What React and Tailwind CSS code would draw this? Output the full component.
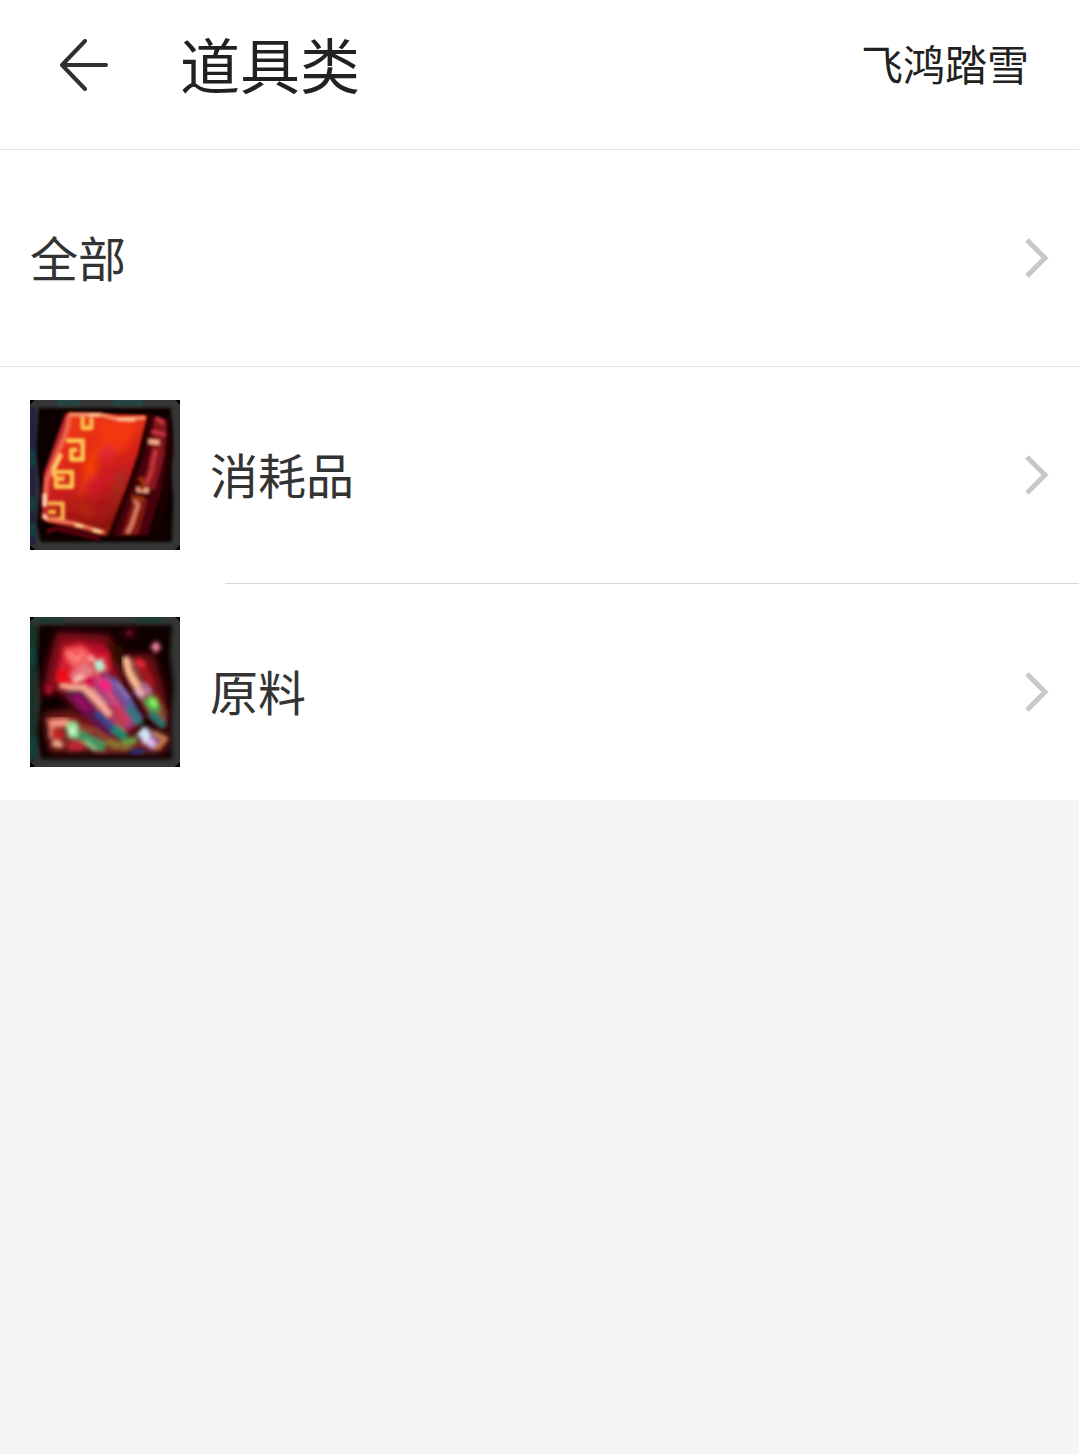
function BookIcon() {
  return (
    <svg viewBox="30 30 450 450" className="size-[150px] shrink-0" aria-hidden="true">
      <defs>
        <linearGradient id="cover" x1="0" y1="0" x2="0.3" y2="1">
          <stop offset="0" stopColor="#ef3a10" />
          <stop offset="0.35" stopColor="#e62e14" />
          <stop offset="0.65" stopColor="#c81c1c" />
          <stop offset="1" stopColor="#8c160c" />
        </linearGradient>
        <filter id="bookSoft" x="-10%" y="-10%" width="120%" height="120%">
          <feGaussianBlur stdDeviation="5" />
        </filter>
        <filter id="bookGlow" x="-30%" y="-30%" width="160%" height="160%">
          <feGaussianBlur stdDeviation="11" />
        </filter>
      </defs>
      <rect x="30" y="30" width="450" height="450" fill="#353536" />
      <g filter="url(#bookSoft)">
        <path d="M34 50V465" stroke="#20243a" strokeWidth="30" />
        <path d="M36 180V230M36 320V360M36 400V440" stroke="#0d4242" strokeWidth="16" />
        <path d="M110 36H180M280 36H370" stroke="#1f4a46" strokeWidth="16" />
        <path d="M56 54H452L458 130L452 220L460 330L455 456H62L50 400L60 300L48 180Z" fill="#080203" />
      </g>

      {/* spine */}
      <g filter="url(#bookSoft)">
        <path d="M385 75L445 84L440 200L425 300L385 435L285 440L300 350Z" fill="#4a0508" />
        <path d="M376 80L395 85L370 210L320 330L285 435L262 430L315 290Z" fill="#250102" />
        <path d="M405 90L438 100L430 200L404 300L368 290L392 190Z" fill="#86121c" />
        <path d="M340 325L382 330L355 432L305 436Z" fill="#82190f" />
        <path d="M408 84L432 100M395 124L436 134M408 180L396 228M400 230L378 286" stroke="#c8363e" strokeWidth="12" fill="none" />
        <path d="M386 154L418 158M350 298L386 302" stroke="#f5ab88" strokeWidth="14" />
        <path d="M340 322L354 345L334 408L322 430" stroke="#d6785e" strokeWidth="13" fill="none" />
        <path d="M360 262L374 280L362 300M335 322L372 328" stroke="#963010" strokeWidth="14" fill="none" />
        <path d="M446 90L454 180L440 300L410 420" stroke="#200104" strokeWidth="12" fill="none" />
      </g>

      {/* cover */}
      <g filter="url(#bookSoft)">
        <path d="M144 68L382 76L354 190L320 290L262 440L82 396L66 320L84 240Z" fill="url(#cover)" />
        <path d="M144 72L112 160L80 250L72 390" stroke="#b9252a" strokeWidth="16" fill="none" />
        <path d="M80 425L110 415L180 432L240 446" stroke="#5d0508" strokeWidth="14" fill="none" />
      </g>
      <g filter="url(#bookGlow)" opacity="0.75">
        <path d="M240 100L350 95L320 180L250 190Z" fill="#f83a0c" />
        <path d="M195 220L240 150L225 260L170 330Z" fill="#ff4a00" />
        <path d="M240 185L285 165L268 225Z" fill="#e3284c" />
        <path d="M190 275L275 250L220 335Z" fill="#d3152e" />
        <path d="M295 240L325 240L290 330L270 380Z" fill="#9a3528" />
        <path d="M150 340L240 350L210 390Z" fill="#b92a08" />
        <path d="M215 350L275 350L245 405Z" fill="#a8161e" />
      </g>

      {/* gold fret along the edge */}
      <g filter="url(#bookSoft)" fill="none" strokeLinejoin="round">
        <path d="M146 74L240 74L295 88L375 84" stroke="#f5906c" strokeWidth="12" />
        <path d="M205 76L240 75M292 88L345 90" stroke="#ffc89a" strokeWidth="10" />
        <path d="M148 78L144 110L130 150L110 196L82 265L74 345" stroke="#ee6450" strokeWidth="15" />
        <path d="M124 192L102 236L104 262" stroke="#ffcb6c" strokeWidth="13" />
        <path d="M188 80V114H214V84" stroke="#fcc34c" strokeWidth="13" />
        <path d="M140 152H188V208H154V180H172" stroke="#ffc652" strokeWidth="14" />
        <path d="M98 246H156V290H108V266H134" stroke="#ffc250" strokeWidth="14" />
        <path d="M84 340H128V388H90M84 366H108" stroke="#fab54a" strokeWidth="13" />
        <path d="M74 312V350M70 374L84 390" stroke="#ffdcb4" strokeWidth="12" />
        <path d="M80 388L122 394L160 400L200 412L254 428" stroke="#f0785c" strokeWidth="12" />
        <path d="M165 404L190 410M218 420L244 426" stroke="#ffd090" strokeWidth="12" />
      </g>
      <path d="M30 30h14l-14 14zM480 30h-14l14 14zM30 480h16l-16-16zM480 480h-16l16-16z" fill="#000" />
    </svg>
  )
}

function MaterialIcon() {
  return (
    <svg viewBox="30 30 450 450" className="size-[150px] shrink-0" aria-hidden="true">
      <defs>
        <filter id="gemSoft" x="-10%" y="-10%" width="120%" height="120%">
          <feGaussianBlur stdDeviation="6" />
        </filter>
        <filter id="gemGlow" x="-30%" y="-30%" width="160%" height="160%">
          <feGaussianBlur stdDeviation="12" />
        </filter>
      </defs>
      <rect x="30" y="30" width="450" height="450" fill="#353536" />
      <g filter="url(#gemSoft)">
        <path d="M34 50V465" stroke="#123028" strokeWidth="30" />
        <path d="M34 120V170M34 390V450" stroke="#0c4a42" strokeWidth="16" />
        <path d="M50 36H130M350 36H430" stroke="#173c30" strokeWidth="16" />
        <path d="M54 54H456L450 140L460 240L452 340L456 456H62L50 380L60 280L50 160Z" fill="#090204" />
      </g>

      {/* dim reds behind the crystals */}
      <g filter="url(#gemGlow)">
        <path d="M110 75L270 85L300 150L310 250L360 360L300 410L200 330L110 250L65 270L85 170Z" fill="#8a0c1c" />
        <path d="M310 70H350V90H310Z" fill="#51041a" />
        <path d="M320 140L400 140L435 250L445 370L380 330L330 240Z" fill="#701014" />
        <path d="M70 320L150 310L260 370L340 400L440 370V435H90Z" fill="#7d1a1c" />
        <path d="M250 100L310 120L300 190L265 160Z" fill="#380c03" />
      </g>

      {/* large crystal head */}
      <g filter="url(#gemSoft)">
        <path d="M128 118L180 104L268 130L274 190L205 225L145 245L105 220L118 170Z" fill="#d51c30" />
        <path d="M132 130L185 118L218 148L200 178L160 185L140 160Z" fill="#f4585c" />
        <path d="M145 138L170 160L190 140" fill="none" stroke="#ff8a86" strokeWidth="10" />
        <path d="M180 106L250 114L268 145L225 136Z" fill="#b70c29" />
        <path d="M112 190L148 190L142 235L112 222Z" fill="#f00818" />
        <path d="M150 200L195 165L225 185L215 215L165 228Z" fill="#e77780" />
        <path d="M74 240L92 244L84 262" stroke="#aa0c20" strokeWidth="14" fill="none" />
      </g>

      {/* shafts */}
      <g filter="url(#gemSoft)" fill="none">
        <path d="M150 245L215 315L285 385" stroke="#5c1248" strokeWidth="46" />
        <path d="M165 265L205 310" stroke="#960c60" strokeWidth="24" />
        <path d="M190 225L250 300L310 375" stroke="#b43a56" strokeWidth="40" />
        <path d="M240 210L300 285L350 350" stroke="#8c4284" strokeWidth="56" />
        <path d="M275 215L320 270L355 335" stroke="#5a5ca4" strokeWidth="24" />
        <path d="M290 225L330 275" stroke="#9d78b4" strokeWidth="10" />
        <path d="M118 236L155 240L190 240L230 280L270 325" stroke="#ffb69a" strokeWidth="16" />
        <path d="M160 222L190 205" stroke="#ffc4b8" strokeWidth="14" />
        <path d="M225 200L245 230L290 295L322 350" stroke="#da4a74" strokeWidth="16" />
        <path d="M215 245L260 295" stroke="#e08c9c" strokeWidth="10" />
        <path d="M240 222L270 248" stroke="#f4207c" strokeWidth="30" />
        <path d="M195 222L222 228" stroke="#dc0c54" strokeWidth="26" />
        <path d="M230 315L270 355L310 395" stroke="#2b4690" strokeWidth="20" />
        <path d="M280 362L318 392" stroke="#178a6c" strokeWidth="26" />
        <path d="M285 295L322 345" stroke="#d8304a" strokeWidth="14" />
        <path d="M325 300L362 352" stroke="#237a78" strokeWidth="22" />
        <path d="M232 160L246 192" stroke="#b9f0d2" strokeWidth="30" />
        <path d="M204 152L224 158" stroke="#ffb8b0" strokeWidth="14" />
      </g>

      {/* narrow crystal on the right */}
      <g filter="url(#gemSoft)" fill="none">
        <path d="M322 160L342 218L382 275L425 345" stroke="#8b4c43" strokeWidth="38" />
        <path d="M316 148L325 195L350 235L372 262" stroke="#ffbd94" strokeWidth="20" />
        <path d="M355 160L370 190L395 235" stroke="#a0161f" strokeWidth="28" />
        <path d="M348 160L374 177" stroke="#ee2834" strokeWidth="18" />
        <path d="M362 235L395 258" stroke="#b07296" strokeWidth="22" />
        <path d="M382 275L414 312" stroke="#48b048" strokeWidth="34" />
        <path d="M395 276L406 298" stroke="#8cff6c" strokeWidth="16" />
        <path d="M390 318L434 358" stroke="#28766b" strokeWidth="24" />
        <path d="M407 260L438 325" stroke="#7a3a1c" strokeWidth="14" />
        <path d="M345 250L366 272" stroke="#d4b2dc" strokeWidth="12" />
      </g>

      {/* lower pieces */}
      <g filter="url(#gemSoft)" fill="none">
        <path d="M85 355L115 340L152 355L178 388L250 422" stroke="#993c2c" strokeWidth="40" />
        <path d="M86 350L145 346" stroke="#ff9c86" strokeWidth="18" />
        <path d="M92 345V395" stroke="#f09080" strokeWidth="10" />
        <path d="M102 370L122 395" stroke="#c8241a" strokeWidth="28" />
        <path d="M156 346L160 392" stroke="#91e89b" strokeWidth="32" />
        <path d="M155 364L158 380" stroke="#e4ffe8" strokeWidth="14" />
        <path d="M175 382L215 402L255 422" stroke="#3c9460" strokeWidth="30" />
        <path d="M180 360L230 372L280 408" stroke="#944a30" strokeWidth="14" />
        <path d="M96 408L128 414" stroke="#f4b092" strokeWidth="18" />
        <path d="M145 418L190 416" stroke="#be2638" strokeWidth="26" />
        <path d="M195 402L228 430" stroke="#8cc08a" strokeWidth="12" />
        <path d="M262 402L310 422L350 395" stroke="#8a742e" strokeWidth="24" />
        <path d="M250 432L310 428" stroke="#7c2a28" strokeWidth="12" />
        <path d="M305 402L345 398" stroke="#4ea448" strokeWidth="16" />
        <path d="M330 435L375 432" stroke="#2b3886" strokeWidth="14" />
        <path d="M355 380L385 365L430 392L395 428Z" fill="#8a5088" stroke="#7c4460" strokeWidth="12" />
        <path d="M358 390L372 370L382 385L370 408" stroke="#d6effa" strokeWidth="16" />
        <path d="M380 398L404 416" stroke="#e8bff8" strokeWidth="20" />
        <path d="M400 378L438 395L408 428" stroke="#cf8846" strokeWidth="12" />
      </g>

      {/* sparks */}
      <g filter="url(#gemSoft)">
        <path d="M408 102V138M392 120H424" stroke="#b84963" strokeWidth="13" />
        <circle cx="407" cy="120" r="9" fill="#ff9cb0" />
        <circle cx="328" cy="78" r="10" fill="#6b0c28" />
      </g>
      <path d="M30 30h14l-14 14zM480 30h-14l14 14zM30 480h16l-16-16zM480 480h-16l16-16z" fill="#000" />
    </svg>
  )
}

function Chevron() {
  return (
    <svg viewBox="0 0 24 40" className="h-10 w-6 shrink-0" fill="none" stroke="#c5c9c8" strokeWidth="5" aria-hidden="true">
      <path d="M2 2L20 20L2 38" />
    </svg>
  )
}

const categories = [
  { label: '全部' },
  { label: '消耗品', icon: BookIcon },
  { label: '原料', icon: MaterialIcon },
]

export default function App() {
  return (
    <div
      lang="zh-CN"
      className="min-h-screen bg-[#f5f5f5] font-['Noto_Sans_CJK_SC',sans-serif] text-[#333333]"
    >
      <header className="flex h-[150px] items-center border-b border-[#e2e2e2] bg-white pr-[50px] pb-5 pl-[60px] text-[#212121]">
        <button type="button" aria-label="返回" className="mr-[72px] shrink-0">
          <svg viewBox="0 0 48 52" className="h-[52px] w-12" fill="none" stroke="#303030" strokeWidth="4" strokeLinecap="round" strokeLinejoin="round">
            <path d="M25 2L2 26L25 50M2 26H46" />
          </svg>
        </button>
        <h1 className="flex-1 pb-1 text-[60px] leading-[72px]">道具类</h1>
        <button type="button" className="pb-1 text-[42px] leading-[48px]">飞鸿踏雪</button>
      </header>

      <nav className="bg-white">
        <ul>
          {categories.map(({ label, icon: Icon }, i) => (
            <li key={label}>
              <a href="#" className="flex h-[216px] items-center gap-[30px] px-[30px]">
                {Icon && <Icon />}
                <span className="flex-1 pb-1 text-[48px] leading-[60px]">{label}</span>
                <Chevron />
              </a>
              {i === 0 && <div className="h-px bg-[#e5e5e5]" />}
              {i === 1 && <div className="ml-[225px] h-px bg-[#d9d9d9]" />}
            </li>
          ))}
        </ul>
      </nav>
    </div>
  )
}
